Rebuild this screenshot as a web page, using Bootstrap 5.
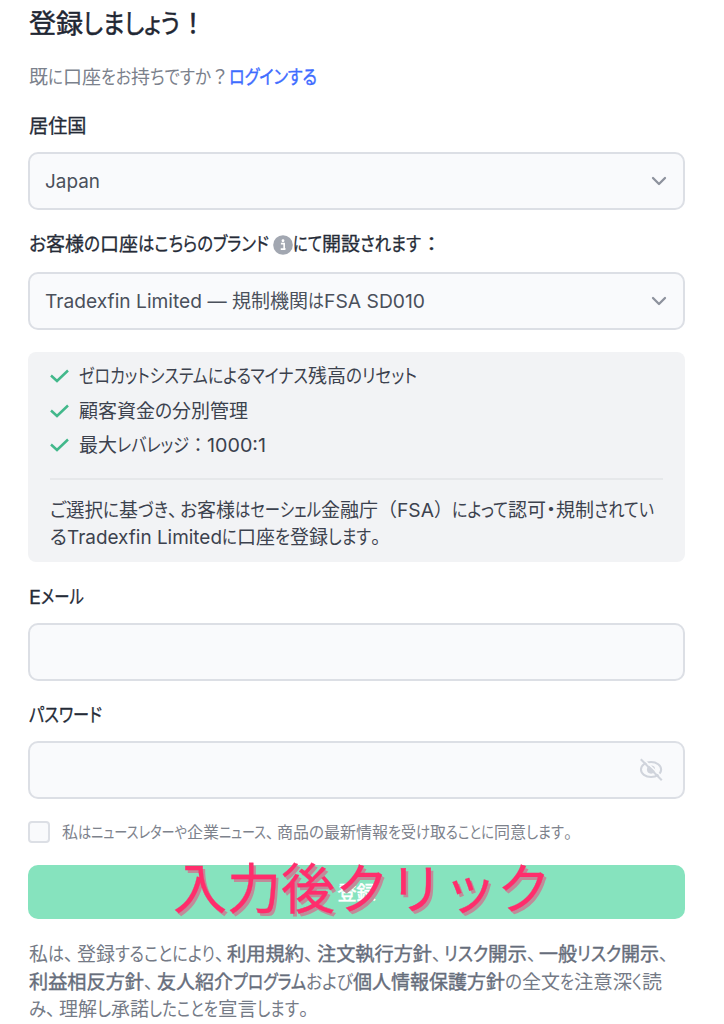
<!DOCTYPE html>
<html lang="ja">
<head>
<meta charset="utf-8">
<meta name="viewport" content="width=device-width, initial-scale=1">
<title>登録</title>
<link href="https://cdn.jsdelivr.net/npm/bootstrap@5.3.0/dist/css/bootstrap.min.css" rel="stylesheet">
<style>
body{font-family:Inter,"Noto Sans CJK JP",sans-serif;font-size:19.1px;color:#2b303b;background:#fff;overflow:hidden}
.signup{width:657px;margin-left:28px}
.ln{display:flex;align-items:center;white-space:pre;line-height:1;padding-left:1px;padding-top:2px}
.ln span[data-w]{display:inline-block;flex:none;transform-origin:0 50%;white-space:pre;font-feature-settings:"palt"}
.ln span.fw{font-feature-settings:normal}
.ttl{height:44px;font-size:26.5px;color:#1f2733;margin:0;font-weight:400;-webkit-text-stroke:.5px #1f2733}
.sub{height:30px;margin-top:18px;color:#7b818c}
.sub a{display:flex;color:#3d6bff;text-decoration:none;-webkit-text-stroke:.4px #3d6bff}
.lb{height:30px;margin:19px 0 0;color:#252b37;-webkit-text-stroke:.3px #252b37}
.fld{height:58px;margin-top:11px;border:2px solid #dcdfe5;border-radius:10px;background:#f9fafc;color:#4a505b;font-size:19.1px;padding:0 15px 0 14px}
.brand{margin-top:13px}
input.fld{width:100%;display:block}
.infobox{height:210px;margin-top:22px;margin-bottom:20px;background:#f2f3f5;border-radius:8px;padding:7px 22px 0;color:#3c424e}
.infobox + .lb{margin-top:0}
.infobox .ln{padding-left:0}
.infobox li .ln{padding-top:1px;padding-left:1px}
.infobox li{height:34.5px;display:flex;align-items:center}
.infobox li svg{margin-right:9px;flex:none}
.rule{height:2px;background:#e6e8ea;margin:15.5px 0 16px}
.infobox .tx,.terms .ln{height:27.5px}
.infobox .tx{padding-top:1px}
.chk{width:22px;height:22px;border:2px solid #dcdfe5;border-radius:5px;background:#f9fafc;margin:0 11px 0 0;float:none}
.news{height:22px;margin-top:22px;font-size:16px;color:#7d828c}
.news .ln{padding-top:0}
.go{height:54px;margin-top:22px;border:0;border-radius:10px;background:#86e3be;color:#fff;font-size:19.1px;-webkit-text-stroke:.5px #fff;line-height:1;padding-top:9px}
.callout-txt{position:absolute;left:145px;top:-6px;font-size:54px;line-height:54px;color:#ff2d6c;white-space:nowrap;-webkit-text-stroke:.3px #ff2d6c;text-shadow:2.5px 2.5px 0 #c08b99;font-family:"Noto Sans CJK JP",sans-serif}
.terms{margin-top:21px;color:#747a86}
.terms b{display:flex;font-weight:400;color:#666d7b;-webkit-text-stroke:.4px #666d7b}
</style>
</head>
<body>
<main class="signup">
<h1 class="ln ttl"><span data-w="54">登録</span><span data-w="97">しましょう</span><span class="fw" data-w="26">！</span></h1>
<div class="ln sub"><span data-w="19">既</span><span data-w="15">に</span><span data-w="38">口座</span><span data-w="30">をお</span><span data-w="19">持</span><span data-w="61">ちですか</span><span class="fw" data-w="18">？</span><a href="#"><span data-w="88">ログインする</span></a></div>
<label class="ln lb"><span data-w="57.5">居住国</span></label>
<div class="fld d-flex align-items-center justify-content-between"><div class="ln"><span data-w="55">Japan</span></div><svg width="18" height="12" viewBox="0 0 18 12" fill="none" stroke="#8d929d" stroke-width="2.3" stroke-linecap="round" stroke-linejoin="round"><path d="M3 3l6 6 6-6"/></svg></div>
<label class="ln lb"><span data-w="17">お</span><span data-w="38">客様</span><span data-w="16">の</span><span data-w="38">口座</span><span data-w="131">はこちらのブランド</span><svg class="ms-1" width="20" height="20" viewBox="0 0 21 21"><circle cx="10.5" cy="10.5" r="10.3" fill="#a2a7b1"/><circle cx="10.5" cy="6" r="1.5" fill="#fff"/><path d="M8.3 9h3.4v5.6h1.4M8.1 14.8h4.9" fill="none" stroke="#fff" stroke-width="1.7"/></svg><span data-w="29">にて</span><span data-w="38">開設</span><span data-w="61">されます</span><span class="fw" data-w="21">：</span></label>
<div class="fld brand d-flex align-items-center justify-content-between"><div class="ln"><span data-w="187">Tradexfin Limited — </span><span data-w="76">規制機関</span><span data-w="16">は</span><span data-w="101">FSA SD010</span></div><svg width="18" height="12" viewBox="0 0 18 12" fill="none" stroke="#8d929d" stroke-width="2.3" stroke-linecap="round" stroke-linejoin="round"><path d="M3 3l6 6 6-6"/></svg></div>
<section class="infobox">
<ul class="list-unstyled m-0">
<li><svg width="19" height="14" viewBox="0 0 19 14" fill="none" stroke="#42b88b" stroke-width="2.5"><path d="M1 6.5l6 5.5L18 1.5"/></svg><div class="ln"><span data-w="229">ゼロカットシステムによるマイナス</span><span data-w="38">残高</span><span data-w="71">のリセット</span></div></li>
<li><svg width="19" height="14" viewBox="0 0 19 14" fill="none" stroke="#42b88b" stroke-width="2.5"><path d="M1 6.5l6 5.5L18 1.5"/></svg><div class="ln"><span data-w="76">顧客資金</span><span data-w="17">の</span><span data-w="76">分別管理</span></div></li>
<li><svg width="19" height="14" viewBox="0 0 19 14" fill="none" stroke="#42b88b" stroke-width="2.5"><path d="M1 6.5l6 5.5L18 1.5"/></svg><div class="ln"><span data-w="38">最大</span><span data-w="72">レバレッジ</span><span class="fw" data-w="18">：</span><span data-w="59">1000:1</span></div></li>
</ul>
<div class="rule"></div>
<div class="ln tx"><span data-w="16">ご</span><span data-w="37">選択</span><span data-w="16">に</span><span data-w="19">基</span><span data-w="30">づき</span><span data-w="12">、</span><span data-w="17">お</span><span data-w="38">客様</span><span data-w="86">はセーシェル</span><span data-w="57">金融庁</span><span class="fw" data-w="19">（</span><span data-w="37">FSA</span><span class="fw" data-w="18">）</span><span data-w="56">によって</span><span data-w="38">認可</span><span data-w="10">・</span><span data-w="38">規制</span><span data-w="60">されてい</span></div>
<div class="ln tx"><span data-w="17">る</span><span data-w="155">Tradexfin Limited</span><span data-w="15">に</span><span data-w="38">口座</span><span data-w="15">を</span><span data-w="38">登録</span><span data-w="43">します</span><span data-w="10">。</span></div>
</section>
<label class="ln lb" for="mail"><span data-w="12">E</span><span data-w="43">メール</span></label>
<input class="fld" id="mail" type="email">
<label class="ln lb"><span data-w="73">パスワード</span></label>
<div class="fld d-flex align-items-center justify-content-end"><svg class="me-1" width="25" height="24" viewBox="0 0 28 26" fill="none" stroke="#d0d4dc" stroke-width="2.3"><ellipse cx="13.5" cy="12.5" rx="11.3" ry="8.4"/><circle cx="13.5" cy="12.5" r="4.6" fill="#d0d4dc" stroke="none"/><path d="M4.5 .5L27 22" stroke="#f9fafc" stroke-width="1.8"/><path d="M2 1L25.5 24.5"/></svg></div>
<div class="news d-flex align-items-center"><input class="form-check-input chk flex-shrink-0" type="checkbox"><div class="ln"><span data-w="16">私</span><span data-w="109">はニュースレターや</span><span data-w="32">企業</span><span data-w="47">ニュース</span><span data-w="11">、</span><span data-w="32">商品</span><span data-w="15">の</span><span data-w="64">最新情報</span><span data-w="13">を</span><span data-w="15">受</span><span data-w="14">け</span><span data-w="16">取</span><span data-w="48">ることに</span><span data-w="32">同意</span><span data-w="38">します</span><span data-w="9">。</span></div></div>
<div class="position-relative"><button class="btn go w-100 d-block" type="button">登録</button><div class="callout-txt">入力後クリック</div></div>
<div class="terms">
<div class="ln"><span data-w="19">私</span><span data-w="16">は</span><span data-w="13">、</span><span data-w="38">登録</span><span data-w="100">することにより</span><span data-w="12">、</span><b><span data-w="77">利用規約</span></b><span data-w="13">、</span><b><span data-w="115">注文執行方針</span></b><span data-w="12">、</span><b><span data-w="44">リスク</span><span data-w="39">開示</span></b><span data-w="12">、</span><b><span data-w="38">一般</span><span data-w="44">リスク</span><span data-w="38">開示</span></b><span data-w="12">、</span></div>
<div class="ln"><b><span data-w="115">利益相反方針</span></b><span data-w="13">、</span><b><span data-w="76">友人紹介</span><span data-w="73">プログラム</span></b><span data-w="47">および</span><b><span data-w="152">個人情報保護方針</span></b><span data-w="17">の</span><span data-w="38">全文</span><span data-w="14">を</span><span data-w="58">注意深</span><span data-w="10">く</span><span data-w="20">読</span></div>
<div class="ln"><span data-w="17">み</span><span data-w="13">、</span><span data-w="38">理解</span><span data-w="14">し</span><span data-w="38">承諾</span><span data-w="69">したことを</span><span data-w="39">宣言</span><span data-w="42">します</span><span data-w="12">。</span></div>
</div>
</main>
<script src="https://cdn.jsdelivr.net/npm/bootstrap@5.3.0/dist/js/bootstrap.bundle.min.js"></script>
<script>
const runs = [...document.querySelectorAll('span[data-w]')].map(el => [el, el.getBoundingClientRect().width]);
for (const [el, natural] of runs) {
  const w = +el.dataset.w;
  el.style.marginRight = (w - natural) + 'px';
  if (!/^[、。]$/.test(el.textContent)) el.style.transform = 'scaleX(' + w / natural + ')';
}
</script>
</body>
</html>
